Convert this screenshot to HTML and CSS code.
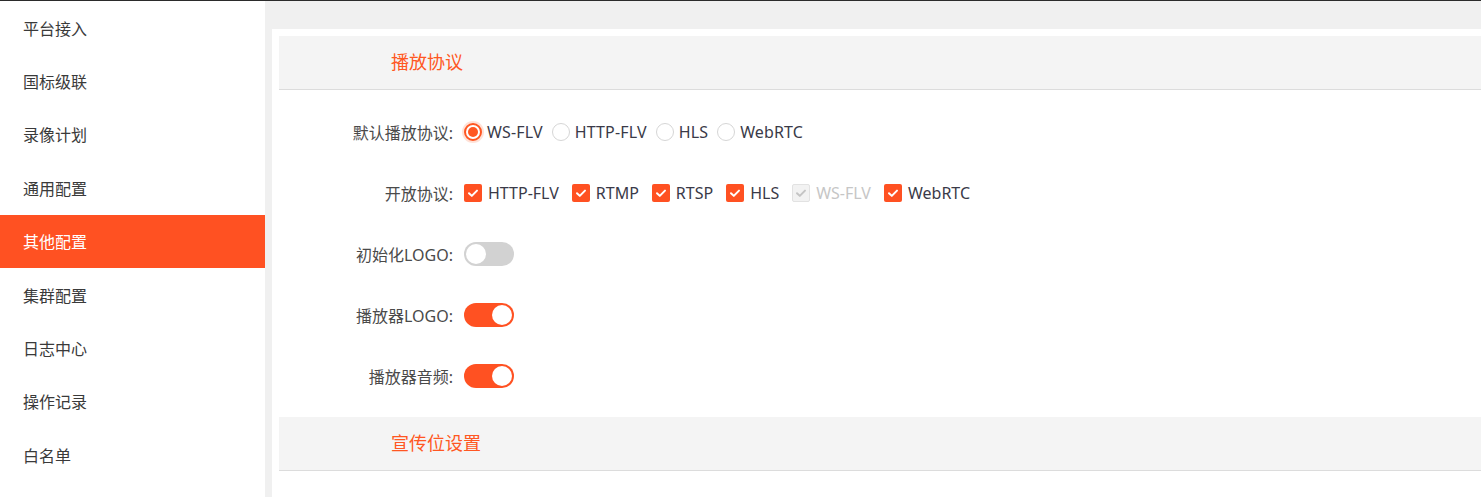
FILE: index.html
```html
<!DOCTYPE html>
<html lang="zh-CN">
<head>
<meta charset="utf-8">
<title>其他配置</title>
<link rel="stylesheet" href="styles.css">
</head>
<body>
<div class="topline"></div>
<div class="layout">
  <nav class="sidebar">
    <div class="nav-item">平台接入</div>
    <div class="nav-item">国标级联</div>
    <div class="nav-item">录像计划</div>
    <div class="nav-item">通用配置</div>
    <div class="nav-item active">其他配置</div>
    <div class="nav-item">集群配置</div>
    <div class="nav-item">日志中心</div>
    <div class="nav-item">操作记录</div>
    <div class="nav-item">白名单</div>
  </nav>
  <main class="main">
    <div class="panel">
      <div class="section-head">播放协议</div>
      <div class="form">
        <div class="row">
          <div class="label">默认播放协议:</div>
          <div class="controls">
            <span class="opt radio-opt"><span class="radio checked"></span>WS-FLV</span>
            <span class="opt radio-opt"><span class="radio"></span>HTTP-FLV</span>
            <span class="opt radio-opt"><span class="radio"></span>HLS</span>
            <span class="opt radio-opt"><span class="radio"></span>WebRTC</span>
          </div>
        </div>
        <div class="row">
          <div class="label">开放协议:</div>
          <div class="controls">
            <span class="opt check-opt"><span class="check"><svg viewBox="0 0 18 18"><path d="M5 9.2l2.8 2.7L13 6.6"/></svg></span>HTTP-FLV</span>
            <span class="opt check-opt"><span class="check"><svg viewBox="0 0 18 18"><path d="M5 9.2l2.8 2.7L13 6.6"/></svg></span>RTMP</span>
            <span class="opt check-opt"><span class="check"><svg viewBox="0 0 18 18"><path d="M5 9.2l2.8 2.7L13 6.6"/></svg></span>RTSP</span>
            <span class="opt check-opt"><span class="check"><svg viewBox="0 0 18 18"><path d="M5 9.2l2.8 2.7L13 6.6"/></svg></span>HLS</span>
            <span class="opt check-opt disabled"><span class="check"><svg viewBox="0 0 18 18"><path d="M5 9.2l2.8 2.7L13 6.6"/></svg></span>WS-FLV</span>
            <span class="opt check-opt"><span class="check"><svg viewBox="0 0 18 18"><path d="M5 9.2l2.8 2.7L13 6.6"/></svg></span>WebRTC</span>
          </div>
        </div>
        <div class="row">
          <div class="label">初始化LOGO:</div>
          <div class="controls"><span class="switch"><span class="knob"></span></span></div>
        </div>
        <div class="row">
          <div class="label">播放器LOGO:</div>
          <div class="controls"><span class="switch on"><span class="knob"></span></span></div>
        </div>
        <div class="row">
          <div class="label">播放器音频:</div>
          <div class="controls"><span class="switch on"><span class="knob"></span></span></div>
        </div>
      </div>
      <div class="section-head">宣传位设置</div>
    </div>
  </main>
</div>
</body>
</html>
```

FILE: styles.css
```css
html, body {
  margin: 0;
  padding: 0;
  height: 100%;
  overflow: hidden;
}
body {
  font-family: "Noto Sans", "Noto Sans CJK SC", sans-serif;
  font-size: 16px;
  color: #333;
  background: #fff;
}
.topline {
  height: 1px;
  background: #2b2b2b;
}
.layout {
  display: flex;
  height: calc(100% - 1px);
}
.sidebar {
  width: 265px;
  flex: none;
  background: #fff;
}
.nav-item {
  height: 53.4px;
  display: flex;
  align-items: center;
  padding-left: 23px;
  font-size: 16px;
  color: #3a3a3a;
}
.nav-item.active {
  background: #ff5122;
  color: #fff;
}
.main {
  flex: 1;
  background: #f0f0f0;
  padding: 28px 0 0 7px;
  min-width: 0;
}
.panel {
  background: #fff;
  height: 100%;
  padding: 7px 0 0 7px;
  box-sizing: border-box;
}
.section-head {
  height: 53px;
  line-height: 53px;
  background: #f4f4f4;
  border-bottom: 1px solid #dcdcdc;
  padding-left: 112px;
  font-size: 18px;
  color: #ff5722;
}
.form {
  padding: 11px 0 11px;
}
.row {
  height: 61px;
  display: flex;
  align-items: center;
}
.label {
  width: 174px;
  margin-right: 11px;
  text-align: right;
  font-size: 16px;
  color: #4a4a4a;
  flex: none;
}
.controls {
  display: flex;
  align-items: center;
}
.opt {
  display: inline-flex;
  align-items: center;
  color: #3a3a48;
  font-size: 16px;
}
.radio-opt {
  margin-right: 9px;
  letter-spacing: 0.15px;
}
.check-opt { margin-right: 13px; }
.radio {
  width: 18px;
  height: 18px;
  box-sizing: border-box;
  border: 1px solid #d6d6d6;
  border-radius: 50%;
  margin-right: 5px;
  position: relative;
  background: #fff;
}
.radio.checked {
  border: 2px solid #ff5722;
  box-shadow: 0 0 0 2px rgba(255, 87, 34, 0.18);
}
.radio.checked::after {
  content: "";
  position: absolute;
  left: 2px;
  top: 2px;
  width: 10px;
  height: 10px;
  border-radius: 50%;
  background: #ff5722;
}
.check {
  width: 18px;
  height: 18px;
  border-radius: 2px;
  background: #ff5122;
  margin-right: 6px;
  display: inline-flex;
}
.check svg {
  width: 18px;
  height: 18px;
}
.check path {
  fill: none;
  stroke: #fff;
  stroke-width: 2;
  stroke-linecap: round;
  stroke-linejoin: round;
}
.disabled { color: #c6c6c6; }
.disabled .check {
  background: #f2f2f2;
  box-sizing: border-box;
  border: 1px solid #e2e2e2;
}
.disabled .check svg { margin: -1px; }
.disabled .check path { stroke: #c4c4c4; }
.switch {
  width: 50px;
  height: 24px;
  border-radius: 12px;
  background: #d2d2d2;
  display: flex;
  align-items: center;
  padding: 0 2px;
  box-sizing: border-box;
}
.switch.on {
  background: #ff5122;
  justify-content: flex-end;
}
.knob {
  width: 20px;
  height: 20px;
  border-radius: 50%;
  background: #fff;
}
```
